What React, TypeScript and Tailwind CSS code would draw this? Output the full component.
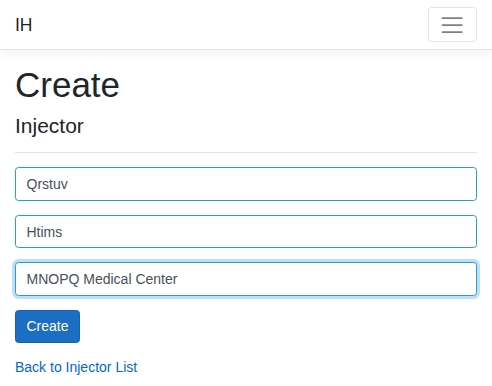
export default function App() {
  return (
    <div className="min-h-screen bg-white font-['Liberation_Sans',Arial,sans-serif] text-[14px] leading-[1.5] text-[#212529]">
      {/* Navbar */}
      <header className="border-b border-[#e5e5e5] bg-white shadow-[0_3.5px_10.5px_rgba(0,0,0,0.05)]">
        <nav className="flex items-center justify-between px-[15px] py-[7px]">
          <a href="#" className="py-[4.5px] text-[17.5px] leading-[1.5] text-[rgba(0,0,0,0.9)]">
            IH
          </a>
          <button
            type="button"
            aria-label="Toggle navigation"
            className="flex items-center justify-center rounded-[3.5px] border border-[rgba(0,0,0,0.1)] px-[10.5px] py-[3.5px]"
          >
            <svg width="26" height="26" viewBox="0 0 30 30" className="block h-[26.25px] w-[26.25px]">
              <path
                d="M4 7h22M4 15h22M4 23h22"
                stroke="rgba(0,0,0,0.5)"
                strokeWidth="2"
                strokeLinecap="round"
                strokeMiterlimit="10"
              />
            </svg>
          </button>
        </nav>
      </header>

      <main className="px-[15px] pt-[14px]">
        <h1 className="mb-[7px] text-[35px] leading-[1.2] font-normal">Create</h1>
        <h4 className="mb-[7px] text-[21px] leading-[1.2] font-normal">Injector</h4>
        <hr className="my-[14px] border-t border-[rgba(0,0,0,0.1)]" />

        <form className="flex flex-col gap-[14px]">
          <input
            defaultValue="Qrstuv"
            className="h-[33.5px] w-full rounded-[3.5px] border border-[#23a2b8] bg-white px-[10.5px] text-[14px] text-[#495057] outline-none"
          />
          <input
            defaultValue="Htims"
            className="h-[33.5px] w-full rounded-[3.5px] border border-[#23a2b8] bg-white px-[10.5px] text-[14px] text-[#495057] outline-none"
          />
          <input
            defaultValue="MNOPQ Medical Center"
            className="h-[33.5px] w-full rounded-[3.5px] border border-[#23a2b8] bg-white px-[10.5px] text-[14px] text-[#495057] shadow-[0_0_0_3px_rgba(0,123,255,0.25)] outline-none"
          />
          <div>
            <button
              type="button"
              className="h-[33.5px] rounded-[3.5px] border border-[#1861ac] bg-[#1b6ec2] px-[10.5px] text-[14px] text-white"
            >
              Create
            </button>
          </div>
        </form>

        <div className="mt-[14px]">
          <a href="#" className="text-[#0366d6]">
            Back to Injector List
          </a>
        </div>
      </main>
    </div>
  );
}
